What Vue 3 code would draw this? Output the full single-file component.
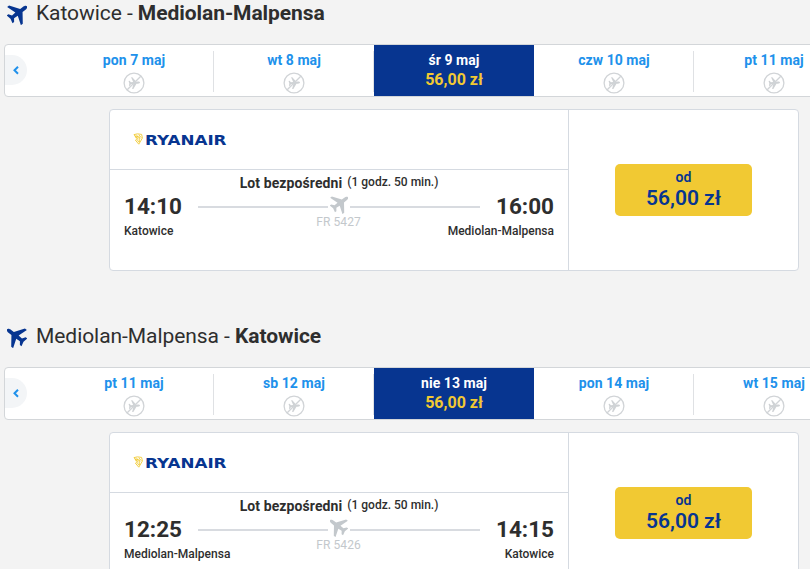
<template>
  <main class="flights">
    <section v-for="trip in trips" :key="trip.number" class="trip">
      <h2 class="title">
        <svg :class="['plane', { back: trip.back }]" viewBox="0 0 20 20">
          <path :d="planePath" transform="translate(2.7 14.3) rotate(-37)" />
        </svg>
        <span class="route">{{ trip.from }} - <b>{{ trip.to }}</b></span>
      </h2>

      <div class="carousel">
        <button class="prev" aria-label="‹">
          <svg viewBox="0 0 6 9"><path d="M5 .8 1.5 4.3 5 7.8" /></svg>
        </button>
        <div
          v-for="day in trip.days"
          :key="day.label"
          :class="['day', { active: day.price }]"
        >
          <span class="date">{{ day.label }}</span>
          <span v-if="day.price" class="day-price">{{ day.price }}</span>
          <svg v-else class="no-flight" viewBox="0 0 22 22">
            <circle cx="11" cy="11" r="9.9" />
            <path
              class="mini"
              :d="planePath"
              transform="translate(5.8 11.4) rotate(-5) scale(.52)"
            />
            <path class="slash" d="M4.2 17.8 17.8 4.2" />
          </svg>
        </div>
      </div>

      <div class="card">
        <div class="info">
          <div class="carrier">
            <svg class="logo" viewBox="0 0 94 12">
              <path
                class="harp"
                d="M1 1.6Q4 .2 8.6 1.4L9.4 5 5.8 11.2 2.4 7.2 4.6 6.2ZM1.6 3 5 3.6M2.4 4.6 5 5M3.4 2.2 7.4 5.6M5.8 1.8 8.4 4.8M4.4 7.2 6 9.4M6 3.4 6.4 9"
              />
              <text x="12" y="11.5" textLength="81.5" lengthAdjust="spacingAndGlyphs">RYANAIR</text>
            </svg>
          </div>
          <div class="schedule">
            <p class="summary">
              <strong>Lot bezpośredni</strong>
              <small>(1 godz. 50 min.)</small>
            </p>
            <div class="times">
              <div class="stop">
                <span class="time">{{ trip.departs }}</span>
                <span class="city">{{ trip.from }}</span>
              </div>
              <div class="path">
                <div class="track">
                  <i></i>
                  <svg :class="['plane', { back: trip.back }]" viewBox="0 0 20 20">
                    <path :d="planePath" transform="translate(2.7 14.3) rotate(-37)" />
                  </svg>
                  <i></i>
                </div>
                <span class="number">{{ trip.number }}</span>
              </div>
              <div class="stop end">
                <span class="time">{{ trip.arrives }}</span>
                <span class="city">{{ trip.to }}</span>
              </div>
            </div>
          </div>
        </div>
        <div class="fare">
          <button class="buy">
            <span class="from">od</span>
            <span class="amount">56,00 zł</span>
          </button>
        </div>
      </div>
    </section>
  </main>
</template>

<script setup>
// Plane seen from above, nose on the positive x axis
const planePath =
  "M21.6 0C21.6-1.4 19.5-2 17.5-2L14.6-2 7.8-11.4 5.4-11.4 8.6-2 4.2-1.7 1.9-4.8-.1-4.8 1 0-.1 4.8 1.9 4.8 4.2 1.7 8.6 2 5.4 11.4 7.8 11.4 14.6 2 17.5 2C19.5 2 21.6 1.4 21.6 0Z";

const trips = [
  {
    from: "Katowice",
    to: "Mediolan-Malpensa",
    departs: "14:10",
    arrives: "16:00",
    number: "FR 5427",
    back: false,
    days: [
      { label: "pon 7 maj" },
      { label: "wt 8 maj" },
      { label: "śr 9 maj", price: "56,00 zł" },
      { label: "czw 10 maj" },
      { label: "pt 11 maj" },
    ],
  },
  {
    from: "Mediolan-Malpensa",
    to: "Katowice",
    departs: "12:25",
    arrives: "14:15",
    number: "FR 5426",
    back: true,
    days: [
      { label: "pt 11 maj" },
      { label: "sb 12 maj" },
      { label: "nie 13 maj", price: "56,00 zł" },
      { label: "pon 14 maj" },
      { label: "wt 15 maj" },
    ],
  },
];
</script>

<style>
body {
  background: #f3f3f3;
  overflow: hidden;
}
</style>

<style scoped>
.flights {
  width: 810px;
  height: 569px;
  overflow: hidden;
  background: #f3f3f3;
  color: #2e2e2e;
  font-family: Roboto, "Liberation Sans", sans-serif;
}

.flights * {
  box-sizing: border-box;
}

.trip {
  height: 323px;
}

button {
  border: 0;
  padding: 0;
  font-family: inherit;
}

.title {
  display: flex;
  gap: 9px;
  height: 44px;
  margin: 0;
  padding-left: 7px;
  font-size: 21px;
  font-weight: 400;
  letter-spacing: -0.06px;
  line-height: 26px;
}

.plane {
  display: block;
  width: 20px;
  height: 20px;
  fill: #073590;
}

.title .plane {
  margin-top: 5px;
}

.plane.back {
  transform: scaleX(-1);
}

.route b {
  font-weight: 700;
}

.carousel {
  display: flex;
  width: 852px;
  height: 53px;
  margin-left: 4px;
  border: 1px solid #d3d6d9;
  border-radius: 4px;
  background: #fff;
}

.prev {
  display: flex;
  align-items: center;
  width: 22px;
  height: 30px;
  margin: 10px 27px 0 0;
  padding-left: 7.5px;
  border-radius: 0 15px 15px 0;
  background: #f3f5f7;
}

.prev svg {
  width: 6px;
  height: 9px;
  overflow: visible;
  fill: none;
  stroke: #2091eb;
  stroke-width: 2;
}

.day {
  display: flex;
  flex: none;
  flex-direction: column;
  align-items: center;
  width: 160px;
  padding-top: 7px;
  background: linear-gradient(#dfe1e4, #dfe1e4) 159px 6px / 1px 41px no-repeat;
  color: #2091eb;
}

.day.active {
  background: #073590;
  color: #fff;
}

.date {
  font-size: 14px;
  font-weight: 700;
  letter-spacing: 0.05px;
  line-height: 16px;
}

.day-price {
  margin-top: 2px;
  color: #f1c933;
  font-size: 16px;
  font-weight: 700;
  line-height: 19px;
}

.no-flight {
  width: 22px;
  height: 22px;
  margin-top: 4px;
  fill: none;
  stroke: #d1d4d7;
  stroke-width: 1.3;
}

.mini {
  fill: #cfd2d5;
  stroke: none;
}

.card {
  display: flex;
  width: 690px;
  height: 162px;
  margin: 12px 0 0 109px;
  border: 1px solid #d5dae1;
  border-radius: 4px;
  background: #fff;
}

.info {
  width: 459px;
  border-right: 1px solid #d5dae1;
}

.carrier {
  height: 60px;
  padding: 23px 0 0 23px;
  border-bottom: 1px solid #d5dae1;
}

.logo {
  display: block;
  width: 94px;
  height: 12px;
  overflow: visible;
}

.logo text {
  fill: #073590;
  font-family: "DejaVu Sans", sans-serif;
  font-size: 14px;
  font-weight: 700;
}

.harp {
  fill: none;
  stroke: #f1c933;
  stroke-width: 0.9;
}

.schedule {
  padding: 4px 14px 0;
}

.summary {
  display: flex;
  justify-content: center;
  gap: 5px;
  height: 20px;
  margin: 0;
}

.summary strong {
  font-size: 14px;
  font-weight: 700;
  letter-spacing: 0.1px;
  line-height: 18px;
}

.summary small {
  font-size: 12px;
  font-weight: 500;
  line-height: 16px;
}

.times {
  display: flex;
}

.stop {
  display: flex;
  flex-direction: column;
  align-items: flex-start;
  width: 74px;
  white-space: nowrap;
}

.stop.end {
  align-items: flex-end;
}

.time {
  font-size: 22.5px;
  font-weight: 700;
  line-height: 24px;
}

.city {
  margin-top: 5px;
  font-size: 12px;
  font-weight: 500;
  line-height: 16px;
}

.path {
  display: flex;
  flex-direction: column;
  align-items: center;
  width: 282px;
}

.track {
  display: flex;
  align-items: center;
  gap: 2px;
  width: 282px;
  height: 22px;
  margin-top: 2px;
}

.track i {
  flex: 1;
  height: 2px;
  background: #d8dbe0;
}

.track .plane {
  width: 18px;
  height: 18px;
  margin-bottom: 4px;
  fill: #c3c8cc;
}

.number {
  margin: -3px 1px 0 0;
  color: #c3c8cc;
  font-size: 12px;
  letter-spacing: 0.1px;
  line-height: 14px;
}

.fare {
  display: flex;
  flex: 1;
  align-items: center;
  justify-content: center;
}

.buy {
  display: flex;
  flex-direction: column;
  align-items: center;
  width: 137px;
  height: 52px;
  padding-top: 5px;
  border-radius: 5px;
  background: #f1c933;
  color: #073590;
}

.from {
  font-size: 14px;
  font-weight: 600;
  line-height: 16px;
}

.amount {
  font-size: 21px;
  font-weight: 600;
  line-height: 26px;
}
</style>
